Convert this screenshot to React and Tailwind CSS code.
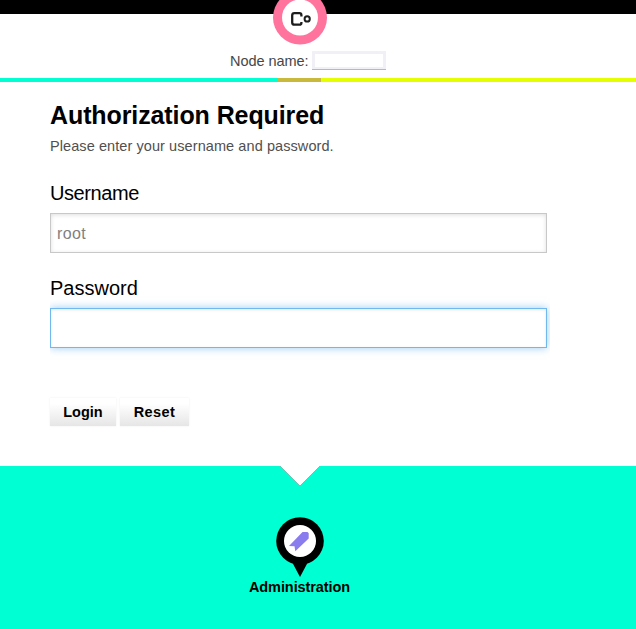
function Logo() {
  return (
    <svg className="absolute -top-[10px] left-[272px]" width="56" height="56" viewBox="272 -10 56 56">
      <circle cx="300" cy="17.5" r="27" fill="#ff739c" />
      <circle cx="300" cy="17.5" r="18" fill="#fff" />
      <path d="M301.4 16.6V15.2Q301.4 13.2 299.4 13.2H294.4Q292.2 13.2 292.2 15.4V22.5Q292.2 24.7 294.4 24.7H299.4Q301.4 24.7 301.4 22.7V21.9" fill="none" stroke="#1d1d1d" strokeWidth="2.3" />
      <circle cx="307.2" cy="18.9" r="2.6" fill="none" stroke="#1d1d1d" strokeWidth="2" />
    </svg>
  );
}

function Pin() {
  return (
    <svg width="48" height="60" viewBox="0 0 48 60">
      <circle cx="24" cy="24" r="23.8" fill="#000" />
      <path d="M16 45L24 60L32 45Z" fill="#000" />
      <circle cx="24" cy="24" r="16" fill="#fff" />
      <path d="M26.5 15H31.5L32.7 16.2V21.5L19.3 34.3L18.5 29.3L13 29Z" fill="#8a7cee" />
    </svg>
  );
}

function Field({ label, value, type, labelClass, inputClass }) {
  return (
    <div className="h-[95px] w-[500px] overflow-hidden">
      <label className={"block h-[37px] text-[20px] leading-[34px] text-black " + labelClass}>{label}</label>
      <input
        type={type}
        defaultValue={value}
        className={"block h-[40px] w-[497px] border bg-white px-[6px] pt-[2px] text-[16px] tracking-[0.35px] text-[#7f7f7f] outline-none " + inputClass}
      />
    </div>
  );
}

function Button({ children, width }) {
  return (
    <button className={"h-[28px] bg-linear-to-b from-white from-20% to-[#e6e6e6] text-[14.5px] font-bold leading-[28px] text-black shadow-[0_0_2px_#eeeeee] " + width}>
      {children}
    </button>
  );
}

export default function App() {
  return (
    <div className="flex h-[629px] w-[636px] flex-col overflow-hidden bg-white font-['Liberation_Sans',Arial,sans-serif]">
      <header className="relative h-[78px]">
        <div className="h-[14px] bg-black" />
        <Logo />
        <div className="flex pl-[230px] pt-[37px]">
          <span className="w-[82px] whitespace-nowrap text-[14.5px] leading-[20px] tracking-[-0.05px] text-[#474747]">Node name:</span>
          <span className="h-[18px] w-[74px] border-[3px] border-b-2 border-[#f1f0f7] bg-white shadow-[0_1px_0_#b9b8c2]" />
        </div>
      </header>
      <div className="flex h-[4px] shrink-0">
        <div className="w-[278px] bg-[#00ffd2]" />
        <div className="w-[43px] bg-[#c8b93c]" />
        <div className="flex-1 bg-[#e6ff00]" />
      </div>
      <main className="h-[384px] shrink-0 pl-[50px] pt-[18px]">
        <h1 className="h-[30px] text-[25px] font-bold leading-[30px] tracking-[-0.1px] text-black">Authorization Required</h1>
        <p className="h-[46px] text-[14.5px] leading-[32px] tracking-[0.08px] text-[#505050]">Please enter your username and password.</p>
        <Field label="Username" value="root" type="text" labelClass="tracking-[-0.42px]" inputClass="border-[#c8c8c8] shadow-[inset_0_1px_4px_rgba(0,0,0,0.13)]" />
        <Field label="Password" value="" type="password" labelClass="" inputClass="border-[#70b8ee] shadow-[inset_0_1px_3px_rgba(0,0,0,0.1),0_0_8px_rgba(82,168,236,0.6)]" />
        <div className="mt-[32px] flex gap-1">
          <Button width="w-[66px]">Login</Button>
          <Button width="w-[69px] tracking-[0.4px]">Reset</Button>
        </div>
      </main>
      <footer className="relative flex flex-1 flex-col bg-[#00ffd2] pt-[51px]">
        <svg className="absolute left-[280px] top-0" width="40" height="21" viewBox="0 0 40 21">
          <path d="M0 0H40L20 20Z" fill="#fff" />
          <path d="M0 0L20 20L40 0" fill="none" stroke="#68aa9d" strokeWidth="0.7" />
        </svg>
        <div className="flex w-[599px] flex-col items-center">
          <div className="pl-px">
            <Pin />
          </div>
          <span className="text-[14.5px] font-bold leading-[20px] tracking-[-0.09px] text-black">Administration</span>
        </div>
      </footer>
    </div>
  );
}
